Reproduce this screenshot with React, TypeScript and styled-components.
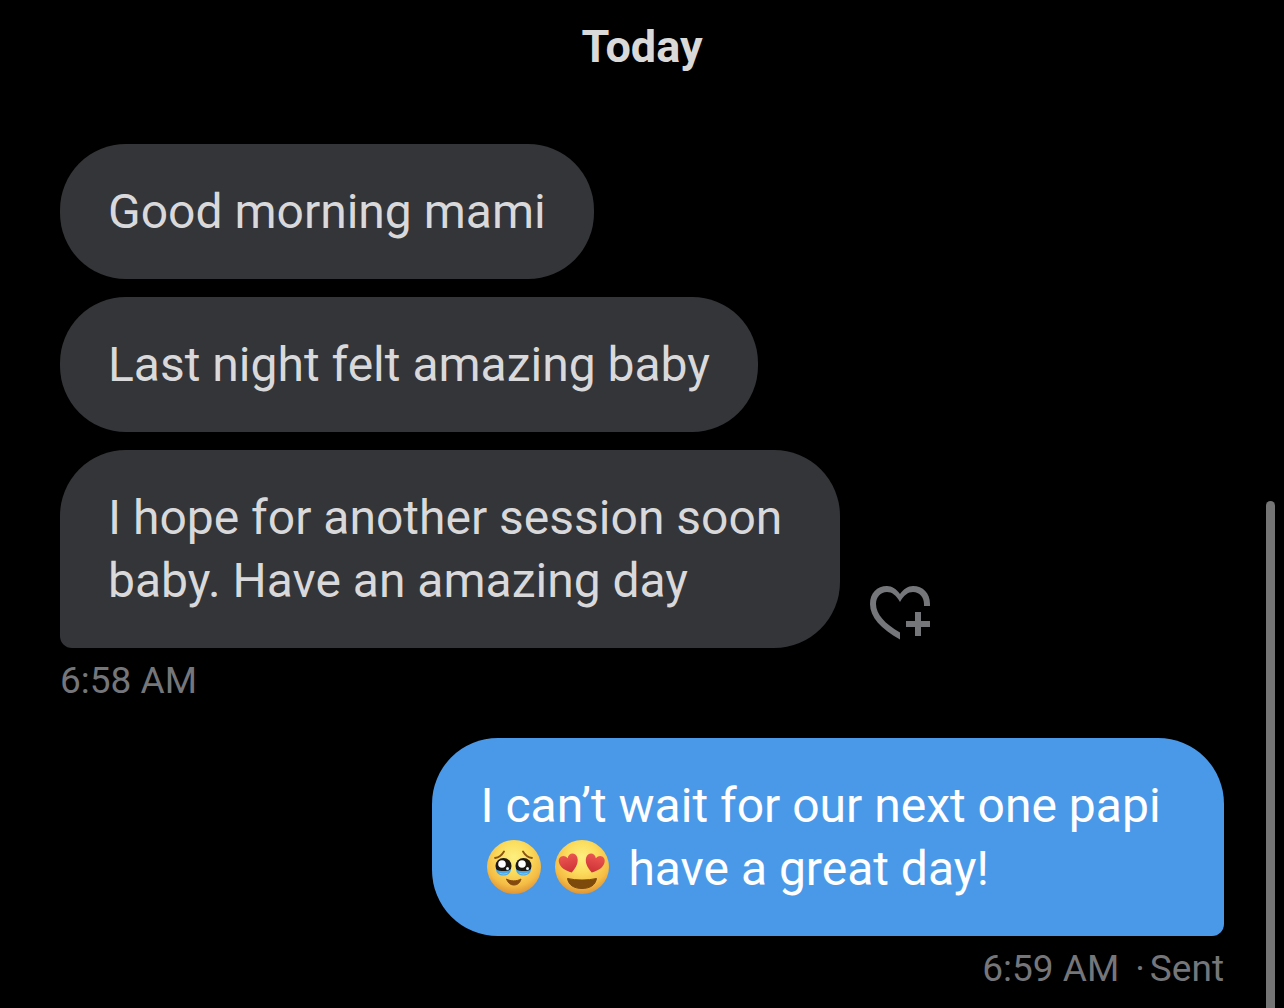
import React from "react";
import styled, { createGlobalStyle, css } from "styled-components";

const GlobalStyle = createGlobalStyle`
  *, *::before, *::after { box-sizing: border-box; }
  body {
    margin: 0;
    background: #000;
    font-family: Roboto, "Liberation Sans", sans-serif;
  }
`;

const Conversation = styled.main`
  display: flex;
  flex-direction: column;
  min-height: 100vh;
  padding: 17px 60px 14px;
`;

const DayHeading = styled.h2`
  margin: 0 0 67px;
  font-size: 45px;
  line-height: 60px;
  font-weight: 700;
  text-align: center;
  color: #d9d9d9;
`;

const Group = styled.section<{ $mine?: boolean }>`
  display: flex;
  flex-direction: column;
  gap: 18px;
  align-items: ${(p) => (p.$mine ? "flex-end" : "flex-start")};
  & + & {
    margin-top: 32px;
  }
`;

const MessageRow = styled.div<{ $mine?: boolean }>`
  display: flex;
  width: 100%;
  align-items: flex-end;
  gap: 30px;
  justify-content: ${(p) => (p.$mine ? "flex-end" : "flex-start")};
`;

const received = css`
  max-width: 67%;
  background: #343538;
  color: #d9d9db;
`;

const sent = css`
  max-width: 68%;
  background: #4a99e9;
  color: #fff;
`;

const Bubble = styled.p<{ $mine?: boolean; $last?: boolean }>`
  margin: 0;
  padding: 36px 48px;
  font-size: 48px;
  line-height: 63px;
  border-radius: 66px;
  ${(p) => (p.$mine ? sent : received)}
  ${(p) => p.$last && (p.$mine ? "border-bottom-right-radius: 12px;" : "border-bottom-left-radius: 12px;")}
`;

const Meta = styled.div`
  display: flex;
  margin-top: -10px;
  font-size: 37px;
  line-height: 50px;
  color: #75767a;
`;

const Separator = styled.span`
  padding: 0 5px 0 16px;
`;

const ReactButton = styled.button`
  flex: none;
  display: flex;
  padding: 0 0 8px;
  border: 0;
  background: none;
  color: #75767a;
  cursor: pointer;
`;

const Emoji = styled.svg`
  width: 56px;
  height: 56px;
  margin: 0 6px;
  vertical-align: -10px;
`;

const ScrollThumb = styled.div`
  position: fixed;
  top: 501px;
  right: 9px;
  bottom: -9px;
  width: 9px;
  border-radius: 5px;
  background: #757575;
`;

const HeartPlus = () => (
  <svg width="60" height="54" viewBox="0 0 60 54" fill="currentColor" aria-hidden="true">
    <path d="M30 53.5C11 43 0 31 0 18C0 7 7 0 17 0C22 0 26.5 3 30 8C33.5 3 38 0 43 0C53 0 60 7 60 18V20H54V18C54 11 49.500 6 43 6C38 6 34 9 30 16C26 9 22 6 17 6C10.5 6 6 11 6 18C6 28 15 38 30 46.5Z" />
    <path d="M45 26h6v9h9v6h-9v9h-6v-9h-9v-6h9z" />
  </svg>
);

const FaceGradient = ({ id }: { id: string }) => (
  <defs>
    <radialGradient id={id} cx="0.5" cy="0.32" r="0.7">
      <stop offset="0" stopColor="#fdf080" />
      <stop offset="0.4" stopColor="#fbdd5e" />
      <stop offset="0.75" stopColor="#f5bd45" />
      <stop offset="1" stopColor="#dc8f35" />
    </radialGradient>
    <linearGradient id={`${id}-heart`} x1="0" y1="0" x2="0" y2="1">
      <stop offset="0" stopColor="#ea5650" />
      <stop offset="1" stopColor="#cd3036" />
    </linearGradient>
  </defs>
);

const TearyFace = () => (
  <Emoji viewBox="0 0 56 56" role="img" aria-label="🥹">
    <FaceGradient id="teary" />
    <circle cx="28" cy="28" r="27" fill="url(#teary)" />
    <path d="M9 19C13 18.500 16 16 18 12.500M46 19C42 18.500 39 16 37 12.500" fill="none" stroke="#8a5514" strokeWidth="1.800" strokeLinecap="round" />
    {[17.5, 37.5].map((x) => (
      <g key={x} transform={`translate(${x} 27)`}>
        <circle r="8" fill="#1d1712" />
        <path d="M-7.500 3.500C-4 5.500 4 5.500 7.500 3.500C7 8 3 9.500 0 9.500C-4 9.500 -7 7.500 -7.500 3.500Z" fill="#4aa9e6" />
        <path d="M-5 6.500C-2 8 2 8 5 6.500C3 9 -3 9 -5 6.500Z" fill="#8bd2f5" />
        <circle cx="-1.500" cy="-2" r="3.800" fill="#fff" />
        <circle cx="4" cy="2.500" r="1.500" fill="#e9f4fa" />
      </g>
    ))}
    <path d="M20.500 40C24.500 42.500 31 42.500 35 40C34 44 31.500 46 28 46C24.500 46 22 44 20.500 40Z" fill="#83490f" stroke="#83490f" strokeLinejoin="round" />
  </Emoji>
);

const HeartEyesFace = () => (
  <Emoji viewBox="0 0 56 56" role="img" aria-label="😍">
    <FaceGradient id="hearts" />
    <circle cx="28" cy="28" r="27" fill="url(#hearts)" />
    <path d="M13.500 39.500C22 41.500 34 41.500 42.500 39.500C41.500 46 36 49.500 28 49.500C20 49.500 14.500 46 13.500 39.500Z" fill="#7d4a0c" stroke="#7d4a0c" strokeLinejoin="round" />
    <g fill="url(#hearts-heart)">
      <path transform="translate(15 24) rotate(-16)" d="M0 10C-6 6 -9.500 2 -9.500 -3C-9.500 -9 -2.500 -10.500 0 -5C2.500 -10.500 9.500 -9 9.500 -3C9.500 2 6 6 0 10Z" />
      <path transform="translate(40.500 24) rotate(16)" d="M0 10C-6 6 -9.500 2 -9.500 -3C-9.500 -9 -2.500 -10.500 0 -5C2.500 -10.500 9.500 -9 9.500 -3C9.500 2 6 6 0 10Z" />
    </g>
  </Emoji>
);

export default function App() {
  return (
    <>
      <GlobalStyle />
      <Conversation>
        <DayHeading>Today</DayHeading>
        <Group>
          <MessageRow>
            <Bubble>Good morning mami</Bubble>
          </MessageRow>
          <MessageRow>
            <Bubble>Last night felt amazing baby</Bubble>
          </MessageRow>
          <MessageRow>
            <Bubble $last>I hope for another session soon baby. Have an amazing day</Bubble>
            <ReactButton type="button" aria-label="Add reaction">
              <HeartPlus />
            </ReactButton>
          </MessageRow>
          <Meta>
            <time>6:58 AM</time>
          </Meta>
        </Group>
        <Group $mine>
          <MessageRow $mine>
            <Bubble $mine $last>
              I can’t wait for our next one papi <TearyFace />
              <HeartEyesFace /> have a great day!
            </Bubble>
          </MessageRow>
          <Meta>
            <time>6:59 AM</time>
            <Separator>·</Separator>
            <span>Sent</span>
          </Meta>
        </Group>
      </Conversation>
      <ScrollThumb />
    </>
  );
}
